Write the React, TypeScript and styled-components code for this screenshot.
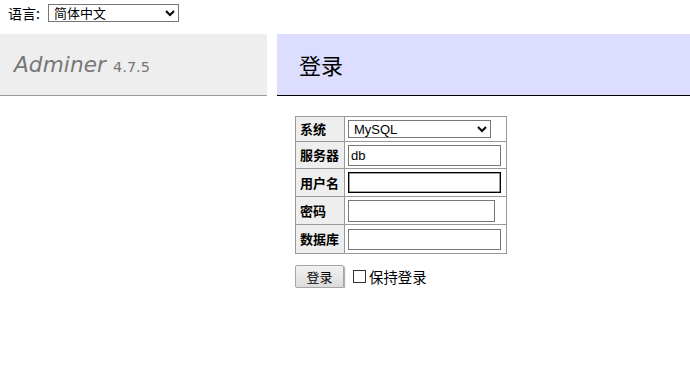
import React from "react";
import styled, { createGlobalStyle } from "styled-components";

const Global = createGlobalStyle`
  html, body { margin: 0; padding: 0; background: #fff; }
  body {
    font-family: "DejaVu Sans", Verdana, "Noto Sans CJK SC", sans-serif;
    font-size: 14.4px;
    line-height: 1.25;
    color: #000;
  }
`;

const cjk = `"Noto Sans CJK SC", "Noto Sans", sans-serif`;

const LangBar = styled.div`
  height: 34px;
  box-sizing: border-box;
  padding: 4px 8px 0;
  display: flex;
  align-items: flex-start;
  gap: 8px;
  font-family: ${cjk};
  font-size: 14px;
  line-height: 18px;
`;

const NativeSelect = styled.select<{ $w: number }>`
  width: ${(p) => p.$w}px;
  height: 18px;
  box-sizing: border-box;
  margin: 0;
  padding: 0 0 0 1px;
  font-family: "Liberation Sans", Arial, ${cjk};
  font-size: 13px;
  border: 1px solid #767676;
  border-radius: 0;
  background: #fff;
  color: #000;
`;

const Main = styled.div`
  display: flex;
  align-items: flex-start;
`;

const Menu = styled.div`
  width: 267px;
  flex: none;
`;

const H1 = styled.h1`
  margin: 0;
  height: 61px;
  box-sizing: content-box;
  display: flex;
  align-items: center;
  padding: 0 0 0 14px;
  gap: 7px;
  background: #eee;
  border-bottom: 1px solid #999;
  color: #777;
  font-weight: normal;
  font-size: 21.6px;
`;

const Brand = styled.span`
  font-style: italic;
  font-family: "DejaVu Sans", Verdana, sans-serif;
  font-size: 21.6px;
  letter-spacing: 0.1px;
  padding-top: 2px;
`;

const Version = styled.span`
  font-size: 14.5px;
  padding-top: 6px;
  font-family: "DejaVu Sans", Verdana, sans-serif;
`;

const Content = styled.div`
  flex: 1;
  margin-left: 10px;
`;

const H2 = styled.h2`
  margin: 0 0 20px;
  height: 61px;
  display: flex;
  align-items: center;
  padding: 0 0 0 22px;
  background: #ddf;
  border-bottom: 1px solid #000;
  font-weight: normal;
  font-size: 22px;
  font-family: ${cjk};
  color: #000;
`;

const Form = styled.div`
  margin-left: 18px;
`;

const Table = styled.table`
  border-collapse: separate;
  border-spacing: 0;
  border-top: 1px solid #999;
  border-left: 1px solid #999;
  font-family: ${cjk};
  font-size: 13px;
`;

const Row = styled.tr<{ $h: number }>`
  height: ${(p) => p.$h}px;
`;

const Th = styled.th`
  background: #eee;
  text-align: left;
  font-weight: bold;
  padding: 0 3px 0 4px;
  width: 41px;
  border-right: 1px solid #999;
  border-bottom: 1px solid #999;
  vertical-align: middle;
  line-height: 16px;
`;

const Td = styled.td`
  padding: 0 4px 0 3px;
  border-right: 1px solid #999;
  border-bottom: 1px solid #999;
  vertical-align: middle;
  width: 154px;
`;

const Input = styled.input<{ $w: number; $focus?: boolean; $h?: number }>`
  display: block;
  box-sizing: border-box;
  width: ${(p) => p.$w}px;
  height: ${(p) => p.$h ?? 21}px;
  margin: 0;
  padding: 1px 2px;
  border: ${(p) => (p.$focus ? "1px solid #000" : "1px solid #767676")};
  outline: none;
  box-shadow: ${(p) => (p.$focus ? "inset 0 0 0 0.5px #444" : "none")};
  font-family: "Liberation Sans", Arial, sans-serif;
  font-size: 13px;
  color: #000;
  background: #fff;
`;

const Actions = styled.div`
  margin-top: 11px;
  display: flex;
  align-items: center;
  gap: 9px;
  font-family: ${cjk};
  font-size: 13px;
`;

const Button = styled.button`
  width: 49px;
  height: 23px;
  margin: 0;
  padding: 0;
  box-sizing: border-box;
  font-family: ${cjk};
  font-size: 13px;
  color: #000;
  background: linear-gradient(#f2f2f2, #dcdcdc);
  border: 1px solid #a6a6a6;
  border-radius: 2px;
  box-shadow: 1px 1px 1px rgba(0, 0, 0, 0.35);
`;

const CheckLabel = styled.label`
  display: flex;
  align-items: center;
  gap: 3px;
  font-size: 14.4px;
`;

const Box = styled.span`
  width: 13px;
  height: 13px;
  box-sizing: border-box;
  border: 1px solid #333;
  background: #fff;
`;

export default function App() {
  return (
    <>
      <Global />
      <LangBar>
        <span>语言:</span>
        <NativeSelect $w={131} defaultValue="zh">
          <option value="zh">简体中文</option>
        </NativeSelect>
      </LangBar>
      <Main>
        <Menu>
          <H1>
            <Brand>Adminer</Brand>
            <Version>4.7.5</Version>
          </H1>
        </Menu>
        <Content>
          <H2>登录</H2>
          <Form>
            <Table>
              <tbody>
                <Row $h={25}>
                  <Th>系统</Th>
                  <Td>
                    <NativeSelect $w={143} defaultValue="mysql">
                      <option value="mysql">MySQL</option>
                    </NativeSelect>
                  </Td>
                </Row>
                <Row $h={27}>
                  <Th>服务器</Th>
                  <Td>
                    <Input $w={153} defaultValue="db" />
                  </Td>
                </Row>
                <Row $h={28}>
                  <Th>用户名</Th>
                  <Td>
                    <Input $w={153} $focus />
                  </Td>
                </Row>
                <Row $h={28}>
                  <Th>密码</Th>
                  <Td>
                    <Input $w={147} $h={22} type="password" />
                  </Td>
                </Row>
                <Row $h={29}>
                  <Th>数据库</Th>
                  <Td>
                    <Input $w={153} />
                  </Td>
                </Row>
              </tbody>
            </Table>
            <Actions>
              <Button type="button">登录</Button>
              <CheckLabel>
                <Box />
                <span>保持登录</span>
              </CheckLabel>
            </Actions>
          </Form>
        </Content>
      </Main>
    </>
  );
}
